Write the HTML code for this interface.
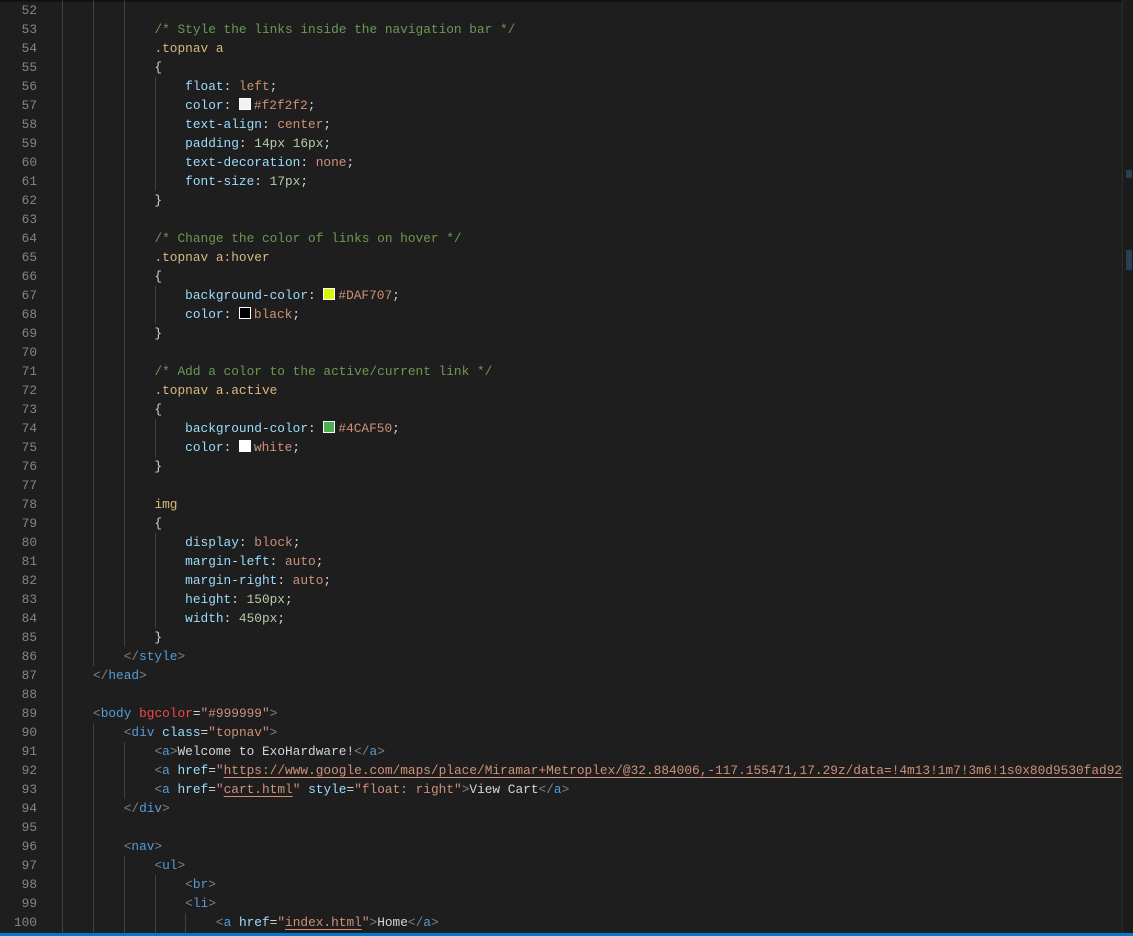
<!DOCTYPE html>
<html><head><meta charset="utf-8">
<style>
html,body{margin:0;padding:0;background:#1e1e1e;width:1133px;height:936px;overflow:hidden;position:relative;}
.ln,.c{position:absolute;height:19px;line-height:19px;font-family:"Liberation Mono",monospace;font-size:12.8px;white-space:pre;}
.ln{left:0;width:37px;text-align:right;color:#858585;}
.c{left:93px;color:#d4d4d4;}
.g{position:absolute;width:1px;background:#404040;}
.cm{color:#6a9955}.sel{color:#d7ba7d}.p{color:#9cdcfe}.v{color:#ce9178}.n{color:#b5cea8}
.t{color:#808080}.tn{color:#569cd6}.a{color:#9cdcfe}.s{color:#ce9178}.r{color:#f44747}
.u{text-decoration:underline;text-decoration-color:#ce9178;text-underline-offset:3px}
.sw{display:inline-block;width:10px;height:10px;border:1px solid #fff;vertical-align:-1px;margin-right:3px;}
</style></head><body>
<div style="position:absolute;left:0;top:0;width:1133px;height:3px;background:linear-gradient(#000,rgba(0,0,0,0));opacity:.6"></div>
<div style="position:absolute;left:1122px;top:0;width:1px;height:933px;background:#2a2a2a"></div>
<div style="position:absolute;left:1123px;top:0;width:10px;height:933px;background:#1c1c1c"></div>
<div style="position:absolute;left:1126px;top:170px;width:6px;height:8px;background:#2b3e52"></div>
<div style="position:absolute;left:1126px;top:250px;width:6px;height:20px;background:#2b3e52"></div>
<div style="position:absolute;left:0;top:933px;width:1133px;height:3px;background:#007acc"></div>

<div class="g" style="left:62px;top:0;height:933px"></div>
<div class="g" style="left:93px;top:0;height:666px"></div>
<div class="g" style="left:93px;top:723px;height:210px"></div>
<div class="g" style="left:124px;top:0;height:647px"></div>
<div class="g" style="left:124px;top:742px;height:57px"></div>
<div class="g" style="left:124px;top:856px;height:77px"></div>
<div class="g" style="left:155px;top:77px;height:114px"></div>
<div class="g" style="left:155px;top:286px;height:38px"></div>
<div class="g" style="left:155px;top:419px;height:38px"></div>
<div class="g" style="left:155px;top:533px;height:95px"></div>
<div class="g" style="left:155px;top:875px;height:58px"></div>
<div class="g" style="left:185px;top:913px;height:20px"></div>

<div class="ln" style="top:1px">52</div><div class="c" style="top:1px"></div>
<div class="ln" style="top:20px">53</div><div class="c" style="top:20px">        <span class="cm">/* Style the links inside the navigation bar */</span></div>
<div class="ln" style="top:39px">54</div><div class="c" style="top:39px">        <span class="sel">.topnav a</span></div>
<div class="ln" style="top:58px">55</div><div class="c" style="top:58px">        {</div>
<div class="ln" style="top:77px">56</div><div class="c" style="top:77px">            <span class="p">float</span>: <span class="v">left</span>;</div>
<div class="ln" style="top:96px">57</div><div class="c" style="top:96px">            <span class="p">color</span>: <span class="sw" style="background:#f2f2f2"></span><span class="v">#f2f2f2</span>;</div>
<div class="ln" style="top:115px">58</div><div class="c" style="top:115px">            <span class="p">text-align</span>: <span class="v">center</span>;</div>
<div class="ln" style="top:134px">59</div><div class="c" style="top:134px">            <span class="p">padding</span>: <span class="n">14px</span> <span class="n">16px</span>;</div>
<div class="ln" style="top:153px">60</div><div class="c" style="top:153px">            <span class="p">text-decoration</span>: <span class="v">none</span>;</div>
<div class="ln" style="top:172px">61</div><div class="c" style="top:172px">            <span class="p">font-size</span>: <span class="n">17px</span>;</div>
<div class="ln" style="top:191px">62</div><div class="c" style="top:191px">        }</div>
<div class="ln" style="top:210px">63</div>
<div class="ln" style="top:229px">64</div><div class="c" style="top:229px">        <span class="cm">/* Change the color of links on hover */</span></div>
<div class="ln" style="top:248px">65</div><div class="c" style="top:248px">        <span class="sel">.topnav a:hover</span></div>
<div class="ln" style="top:267px">66</div><div class="c" style="top:267px">        {</div>
<div class="ln" style="top:286px">67</div><div class="c" style="top:286px">            <span class="p">background-color</span>: <span class="sw" style="background:#DAF707"></span><span class="v">#DAF707</span>;</div>
<div class="ln" style="top:305px">68</div><div class="c" style="top:305px">            <span class="p">color</span>: <span class="sw" style="background:#000"></span><span class="v">black</span>;</div>
<div class="ln" style="top:324px">69</div><div class="c" style="top:324px">        }</div>
<div class="ln" style="top:343px">70</div>
<div class="ln" style="top:362px">71</div><div class="c" style="top:362px">        <span class="cm">/* Add a color to the active/current link */</span></div>
<div class="ln" style="top:381px">72</div><div class="c" style="top:381px">        <span class="sel">.topnav a.active</span></div>
<div class="ln" style="top:400px">73</div><div class="c" style="top:400px">        {</div>
<div class="ln" style="top:419px">74</div><div class="c" style="top:419px">            <span class="p">background-color</span>: <span class="sw" style="background:#4CAF50"></span><span class="v">#4CAF50</span>;</div>
<div class="ln" style="top:438px">75</div><div class="c" style="top:438px">            <span class="p">color</span>: <span class="sw" style="background:#fff"></span><span class="v">white</span>;</div>
<div class="ln" style="top:457px">76</div><div class="c" style="top:457px">        }</div>
<div class="ln" style="top:476px">77</div>
<div class="ln" style="top:495px">78</div><div class="c" style="top:495px">        <span class="sel">img</span></div>
<div class="ln" style="top:514px">79</div><div class="c" style="top:514px">        {</div>
<div class="ln" style="top:533px">80</div><div class="c" style="top:533px">            <span class="p">display</span>: <span class="v">block</span>;</div>
<div class="ln" style="top:552px">81</div><div class="c" style="top:552px">            <span class="p">margin-left</span>: <span class="v">auto</span>;</div>
<div class="ln" style="top:571px">82</div><div class="c" style="top:571px">            <span class="p">margin-right</span>: <span class="v">auto</span>;</div>
<div class="ln" style="top:590px">83</div><div class="c" style="top:590px">            <span class="p">height</span>: <span class="n">150px</span>;</div>
<div class="ln" style="top:609px">84</div><div class="c" style="top:609px">            <span class="p">width</span>: <span class="n">450px</span>;</div>
<div class="ln" style="top:628px">85</div><div class="c" style="top:628px">        }</div>
<div class="ln" style="top:647px">86</div><div class="c" style="top:647px">    <span class="t">&lt;/</span><span class="tn">style</span><span class="t">&gt;</span></div>
<div class="ln" style="top:666px">87</div><div class="c" style="top:666px"><span class="t">&lt;/</span><span class="tn">head</span><span class="t">&gt;</span></div>
<div class="ln" style="top:685px">88</div>
<div class="ln" style="top:704px">89</div><div class="c" style="top:704px"><span class="t">&lt;</span><span class="tn">body</span> <span class="r">bgcolor</span>=<span class="s">"#999999"</span><span class="t">&gt;</span></div>
<div class="ln" style="top:723px">90</div><div class="c" style="top:723px">    <span class="t">&lt;</span><span class="tn">div</span> <span class="a">class</span>=<span class="s">"topnav"</span><span class="t">&gt;</span></div>
<div class="ln" style="top:742px">91</div><div class="c" style="top:742px">        <span class="t">&lt;</span><span class="tn">a</span><span class="t">&gt;</span>Welcome to ExoHardware!<span class="t">&lt;/</span><span class="tn">a</span><span class="t">&gt;</span></div>
<div class="ln" style="top:761px">92</div><div class="c" style="top:761px">        <span class="t">&lt;</span><span class="tn">a</span> <span class="a">href</span>=<span class="s">"<span class="u">https://www.google.com/maps/place/Miramar+Metroplex/@32.884006,-117.155471,17.29z/data=!4m13!1m7!3m6!1s0x80d9530fad92</span></span></div>
<div class="ln" style="top:780px">93</div><div class="c" style="top:780px">        <span class="t">&lt;</span><span class="tn">a</span> <span class="a">href</span>=<span class="s">"<span class="u">cart.html</span>"</span> <span class="a">style</span>=<span class="s">"float: right"</span><span class="t">&gt;</span>View Cart<span class="t">&lt;/</span><span class="tn">a</span><span class="t">&gt;</span></div>
<div class="ln" style="top:799px">94</div><div class="c" style="top:799px">    <span class="t">&lt;/</span><span class="tn">div</span><span class="t">&gt;</span></div>
<div class="ln" style="top:818px">95</div>
<div class="ln" style="top:837px">96</div><div class="c" style="top:837px">    <span class="t">&lt;</span><span class="tn">nav</span><span class="t">&gt;</span></div>
<div class="ln" style="top:856px">97</div><div class="c" style="top:856px">        <span class="t">&lt;</span><span class="tn">ul</span><span class="t">&gt;</span></div>
<div class="ln" style="top:875px">98</div><div class="c" style="top:875px">            <span class="t">&lt;</span><span class="tn">br</span><span class="t">&gt;</span></div>
<div class="ln" style="top:894px">99</div><div class="c" style="top:894px">            <span class="t">&lt;</span><span class="tn">li</span><span class="t">&gt;</span></div>
<div class="ln" style="top:913px">100</div><div class="c" style="top:913px">                <span class="t">&lt;</span><span class="tn">a</span> <span class="a">href</span>=<span class="s">"<span class="u">index.html</span>"</span><span class="t">&gt;</span>Home<span class="t">&lt;/</span><span class="tn">a</span><span class="t">&gt;</span></div>
</body></html>
